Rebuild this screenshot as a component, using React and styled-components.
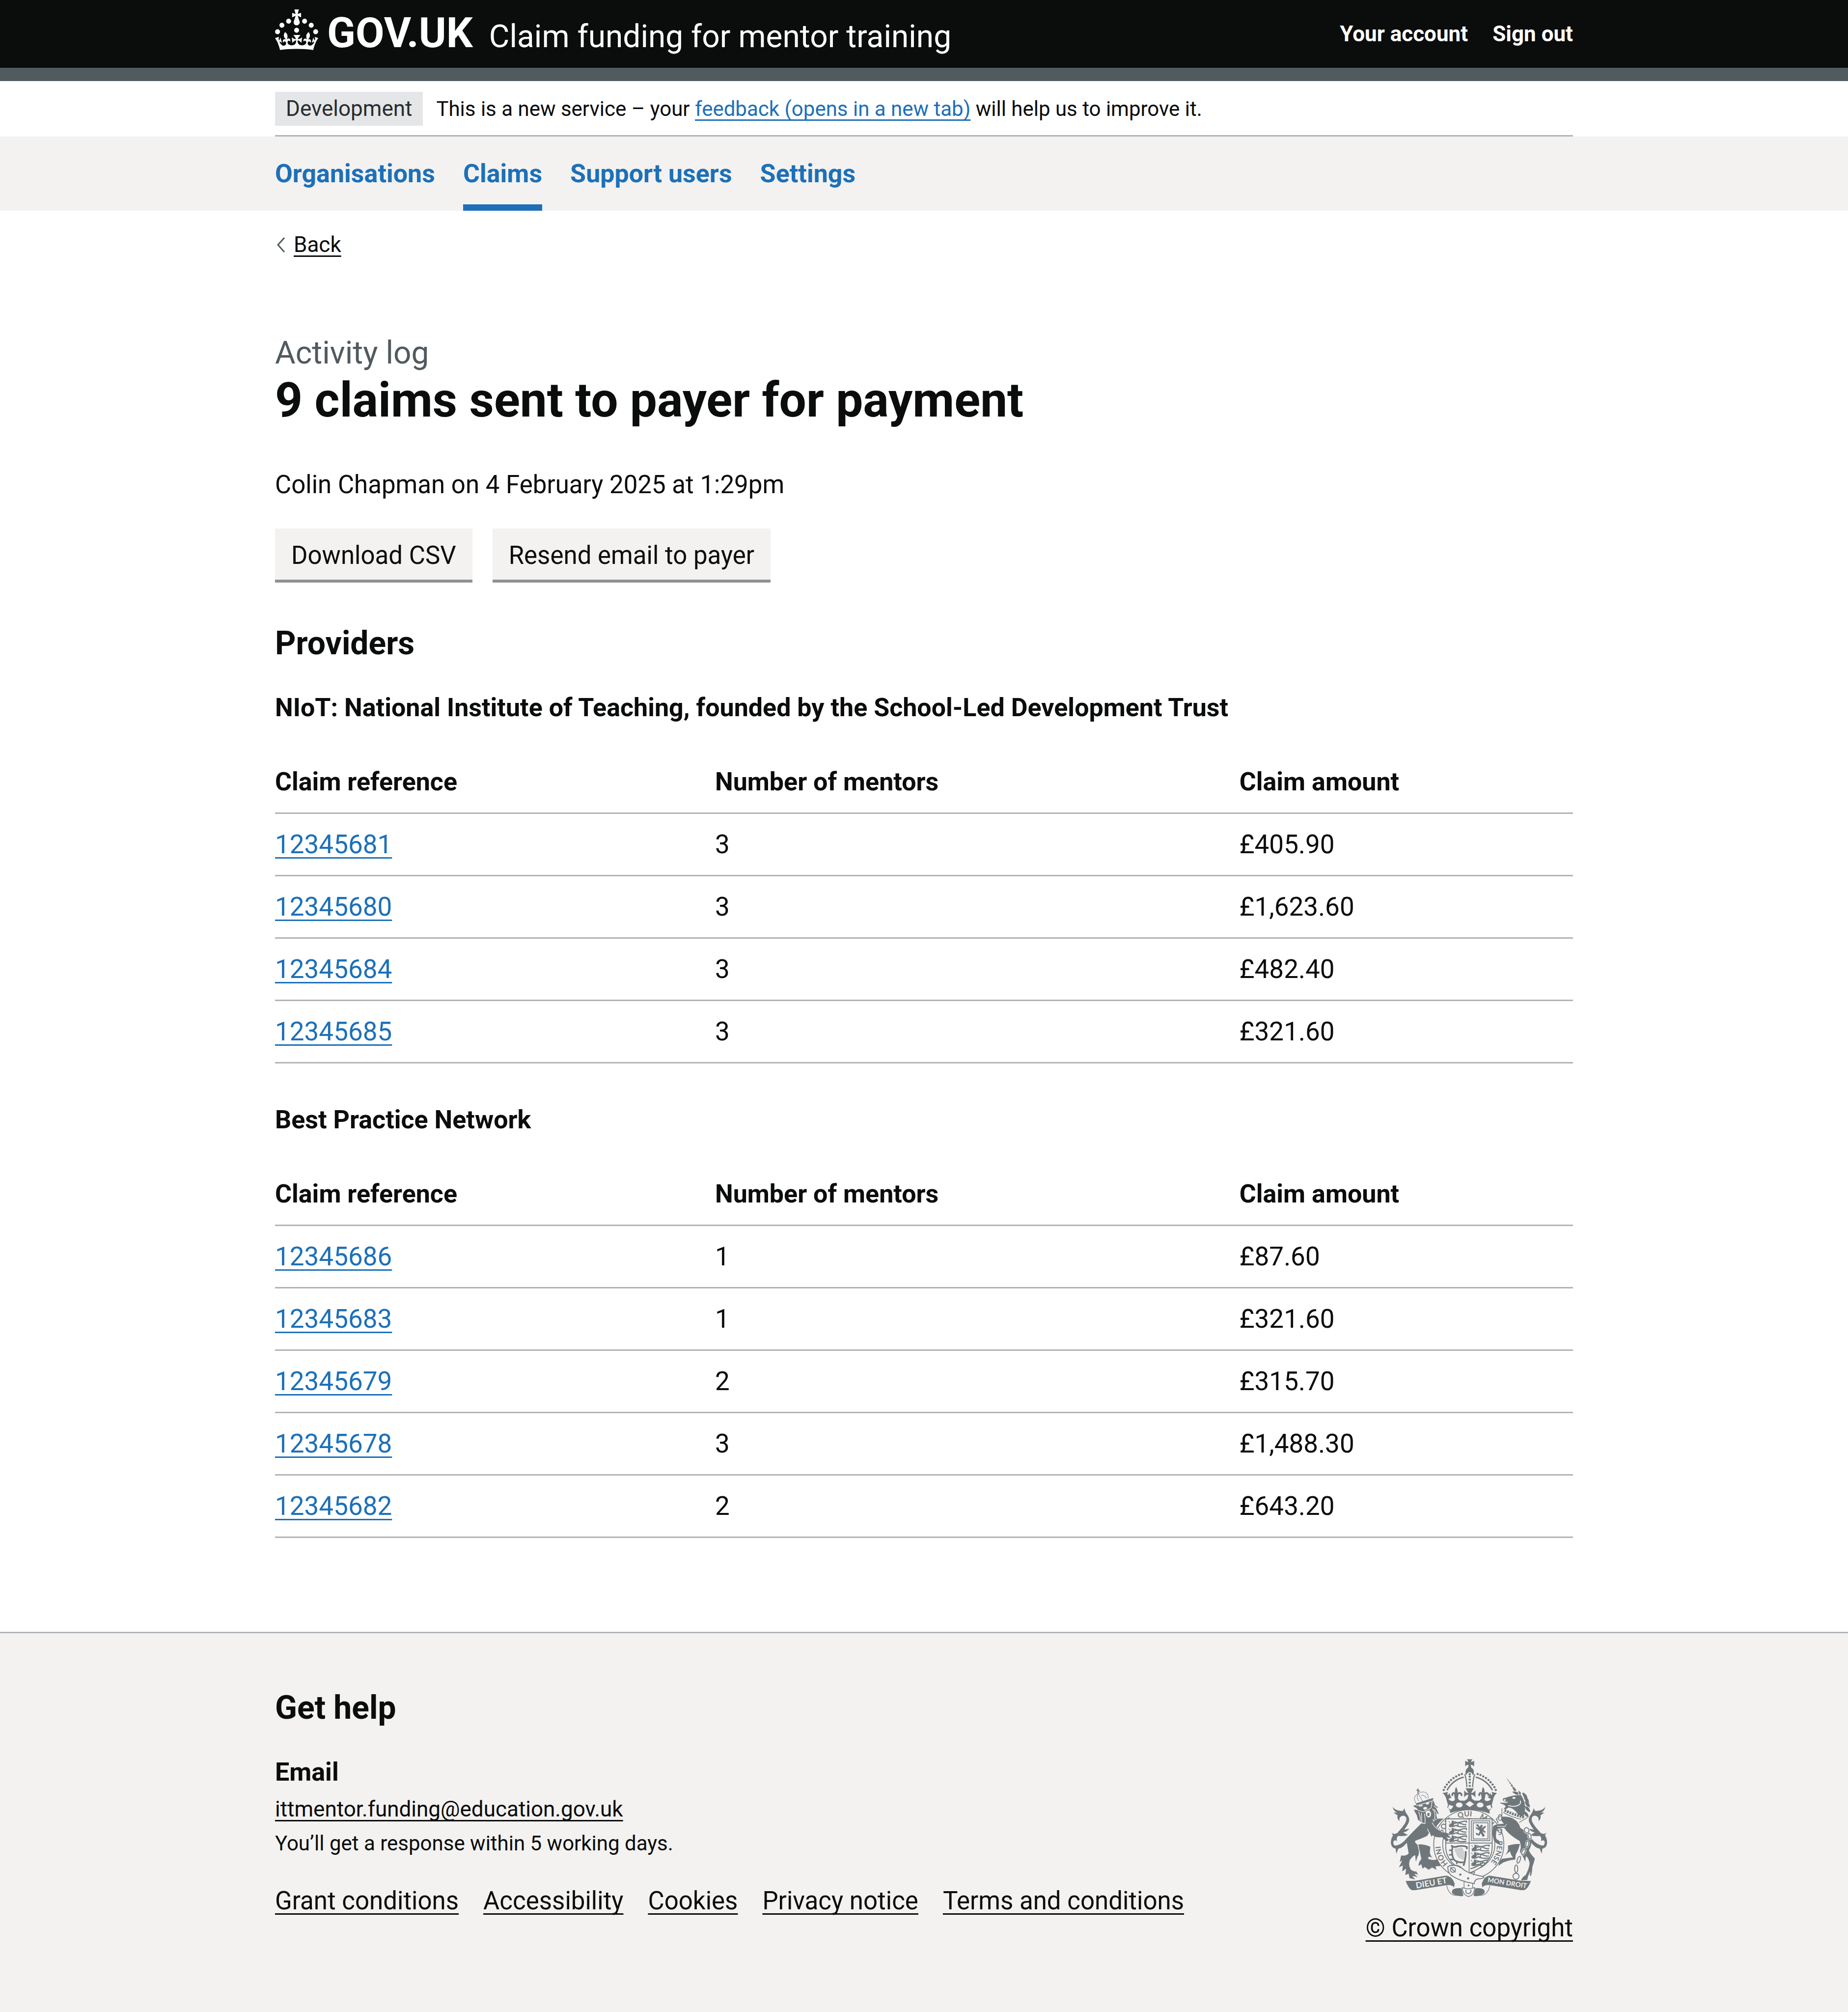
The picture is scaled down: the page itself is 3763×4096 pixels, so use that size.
import React from "react";
import styled, { createGlobalStyle } from "styled-components";

const color = {
  text: "#0b0c0c",
  secondary: "#505a5f",
  link: "#1d70b8",
  border: "#b1b4b6",
  panel: "#f3f2f1",
  crest: "#6f777b",
  white: "#ffffff",
};

const GlobalStyle = createGlobalStyle`
  *, *::before, *::after { box-sizing: border-box; }
  body {
    margin: 0;
    background: ${color.panel};
    color: ${color.text};
    font-family: Roboto, "Liberation Sans", sans-serif;
    font-size: 51px;
    line-height: 69px;
    -webkit-font-smoothing: antialiased;
  }
  h1, h2, h3, p, ul { margin: 0; padding: 0; }
  ul { list-style: none; }
`;

const Container = styled.div`
  max-width: 2643px;
  margin: 0 auto;
`;

const Link = styled.a`
  color: ${(p) => (p.$muted ? color.text : color.link)};
  text-decoration: underline;
  text-decoration-thickness: 3px;
  text-decoration-skip-ink: none;
  text-underline-offset: ${(p) => (p.$small ? "7px" : "8px")};
`;

/* Header */

const HeaderBar = styled.header`
  background: ${color.text};
  border-bottom: 27px solid ${color.secondary};
`;

const HeaderInner = styled(Container)`
  display: flex;
  justify-content: space-between;
  height: 138px;
`;

const Brand = styled.div`
  display: flex;
  align-items: baseline;
  gap: 33px;
`;

const HomeLink = styled.a`
  display: flex;
  align-items: baseline;
  gap: 18px;
  color: ${color.white};
  font-size: 85px;
  font-weight: 700;
  line-height: 134px;
  text-decoration: none;
`;

const CrownIcon = styled.svg`
  align-self: flex-start;
  width: 88px;
  height: 83px;
  margin-top: 19px;
  fill: currentColor;
`;

const ServiceLink = styled.a`
  color: ${color.white};
  font-size: 64px;
  text-decoration: none;
`;

const AccountNav = styled.nav`
  display: flex;
  gap: 50px;
`;

const AccountLink = styled.a`
  color: ${color.white};
  font-size: 44px;
  font-weight: 700;
  line-height: 138px;
  text-decoration: none;
`;

/* Phase banner */

const PhaseArea = styled.div`
  background: ${color.white};
`;

const PhaseBanner = styled(Container)`
  display: flex;
  gap: 27px;
  padding: 22px 0 19px;
  border-bottom: 3px solid ${color.border};
`;

const PhaseTag = styled.strong`
  padding: 0 22px;
  background: #e5e6e7;
  color: #282d30;
  font-size: 44px;
  font-weight: 400;
`;

const PhaseText = styled.p`
  font-size: 42px;
`;

/* Primary navigation */

const NavBar = styled.nav`
  background: ${color.panel};
`;

const NavList = styled(Container).attrs({ as: "ul" })`
  && { margin: 0 auto; }
  display: flex;
  gap: 57px;
`;

const NavLink = styled.a`
  display: block;
  color: ${color.link};
  font-size: 52px;
  font-weight: 700;
  line-height: 151px;
  text-decoration: none;
  box-shadow: ${(p) => (p.$current ? `inset 0 -13px ${color.link}` : "none")};
`;

/* Main content */

const Page = styled.div`
  background: ${color.white};
  padding: 42px 0 111px;
`;

const BackRow = styled.div`
  display: flex;
  align-items: center;
  gap: 18px;
  padding-left: 4px;
  font-size: 44px;
  line-height: 55px;
`;

const Chevron = styled.svg`
  width: 16px;
  height: 31px;
  fill: none;
  stroke: ${color.secondary};
  stroke-width: 3;
`;

const Main = styled.main`
  padding-top: 151px;
`;

const Caption = styled.span`
  display: block;
  color: ${color.secondary};
  font-size: 64px;
  font-weight: 400;
  line-height: 83px;
`;

const Title = styled.h1`
  font-size: 98px;
  font-weight: 700;
  line-height: 110px;
  padding-bottom: 82px;
`;

const ButtonGroup = styled.div`
  display: flex;
  gap: 41px;
  padding: 55px 0 82px;
`;

const Button = styled.button`
  padding: 20px 33px 15px;
  border: 0;
  border-bottom: 6px solid #929191;
  background: ${color.panel};
  color: ${color.text};
  font: inherit;
`;

const SectionHeading = styled.h2`
  font-size: 66px;
  font-weight: 700;
  line-height: 83px;
  padding-bottom: 55px;
`;

const SubHeading = styled.h3`
  font-size: 52px;
  font-weight: 700;
  line-height: 69px;
  padding-bottom: ${(p) => (p.$tight ? "14px" : "55px")};
`;

const Table = styled.table`
  width: 100%;
  table-layout: fixed;
  border-spacing: 0;
  margin-bottom: 80px;
`;

const HeadCell = styled.th`
  width: ${(p) => p.$width};
  padding: 27px 55px 27px 0;
  border-bottom: 3px solid ${color.border};
  font-size: 52px;
  font-weight: 700;
  line-height: 70px;
  text-align: left;
`;

const Cell = styled.td`
  padding: 27px 55px 27px 0;
  border-bottom: 3px solid ${color.border};
  font-size: 53px;
  line-height: 70px;
`;

/* Footer */

const FooterBar = styled.footer`
  padding: 110px 0 137px;
  border-top: 3px solid ${color.border};
  background: ${color.panel};
`;

const FooterRow = styled.div`
  display: flex;
  align-items: flex-end;
  justify-content: space-between;
`;

const FooterContent = styled.div`
  padding-bottom: 55px;
`;

const ContactList = styled.ul`
  display: grid;
  gap: 14px;
  line-height: 55px;
`;

const ContactItem = styled.li`
  font-size: ${(p) => (p.$note ? "42px" : "44px")};
`;

const FooterLinks = styled.ul`
  display: flex;
  gap: 50px;
  padding-top: 55px;
`;

const Copyright = styled.div`
  display: flex;
  flex-direction: column;
  align-items: center;
  gap: 28px;
`;

const CrestIcon = styled.svg`
  width: 321px;
  height: 281px;
`;

function Crown() {
  return (
    <CrownIcon viewBox="0 0 32 30" aria-hidden="true">
      <path d="M22.6 10.4c-1 .4-2-.1-2.4-1-.4-.9.1-2 1-2.4.9-.4 2 .1 2.4 1s-.1 2-1 2.4m-5.9 6.7c-.9.4-2-.1-2.4-1-.4-.9.1-2 1-2.4.9-.4 2 .1 2.4 1s-.1 2-1 2.4m10.8-3.7c-1 .4-2-.1-2.4-1-.4-.9.1-2 1-2.4.9-.4 2 .1 2.4 1s0 2-1 2.4m3.3 4.8c-1 .4-2-.1-2.4-1-.4-.9.1-2 1-2.4.9-.4 2 .1 2.4 1s-.1 2-1 2.4M17 4.7l2.3 1.2V2.5l-2.3.7-.2-.2.9-3h-3.4l.9 3-.2.2c-.1.1-2.3-.7-2.3-.7v3.4L15 4.7c.1.1.1.2.2.2l-1.3 4c-.1.2-.1.4-.1.6 0 1.1.8 2 1.9 2.2h.7c1-.2 1.9-1.1 1.9-2.1 0-.2 0-.4-.1-.6l-1.3-4c-.1-.2 0-.2.1-.3m-7.6 5.7c.9.4 2-.1 2.4-1 .4-.9-.1-2-1-2.4-.9-.4-2 .1-2.4 1s0 2 1 2.4m-5 3c.9.4 2-.1 2.4-1 .4-.9-.1-2-1-2.4-.9-.4-2 .1-2.4 1s.1 2 1 2.4m-3.2 4.8c.9.4 2-.1 2.4-1 .4-.9-.1-2-1-2.4-.9-.4-2 .1-2.4 1s0 2 1 2.4m14.8 11c4.4 0 8.6.3 12.3.8 1.1-4.5 2.4-7 3.7-8.8l-2.5-.9c.2 1.3.3 1.9 0 2.7-.4-.4-.8-1.1-1.1-2.3l-1.2 4c.7-.5 1.3-.8 2-.9-1.1 2.5-2.6 3.1-3.5 3-1.1-.2-1.7-1.2-1.5-2.1.3-1.2 1.5-1.5 2.1-.1 1.1-2.3-.8-3-2-2.3 1.9-1.9 2.1-3.5.6-5.6-2.1 1.6-2.1 3.2-1.2 5.5-1.2-1.4-3.2-.6-2.5 1.6.9-1.4 2.1-.5 1.9.8-.2 1.1-1.7 2.1-3.5 1.9-2.7-.2-2.9-2.1-2.9-3.6.7-.1 1.9.5 2.9 1.9l.4-4.3c-1.1 1.1-2.1 1.4-3.2 1.4.4-1.2 2.1-3 2.1-3h-5.4s1.7 1.9 2.1 3c-1.1 0-2.1-.2-3.2-1.4l.4 4.3c1-1.4 2.2-2 2.9-1.9-.1 1.5-.2 3.4-2.9 3.6-1.9.2-3.4-.8-3.5-1.9-.2-1.3 1-2.2 1.9-.8.7-2.3-1.2-3-2.5-1.6.9-2.2.9-3.9-1.2-5.5-1.5 2-1.3 3.7.6 5.6-1.2-.7-3.1 0-2 2.3.6-1.4 1.8-1.1 2.1.1.2.9-.3 1.9-1.5 2.1-.9.2-2.4-.5-3.5-3 .6 0 1.2.3 2 .9l-1.2-4c-.3 1.1-.7 1.9-1.1 2.3-.3-.8-.2-1.4 0-2.7l-2.9.9C1.3 23 2.6 25.5 3.7 30c3.7-.5 7.9-.8 12.3-.8" />
    </CrownIcon>
  );
}

const archBeads = [
  [735, 203], [710, 212], [685, 225], [661, 239], [639, 257],
  [620, 276], [602, 297], [586, 320], [574, 345],
];

/* One walking lion of the shield, drawn from its top left corner. */
function PassantLion({ x, y }) {
  return (
    <g transform={`translate(${x} ${y})`}>
      <path d="M4 2l14 12-2 14q12 2 16-6l2-22 20 6v40l-18 6q-24 0-30-14l14-4z" />
      <path
        d="M56 10q26 16 54 6t54-10v14M52 28q34-14 62 0t50 8M10 52q34 10 62-8q34 20 92 10M92 28l-6 18"
        fill="none"
        stroke={color.crest}
        strokeWidth="10"
      />
    </g>
  );
}

function SideTail() {
  return (
    <g>
      <path d="M120 492Q135 530 210 532L225 507Q228 535 245 558Q272 590 266 625Q250 670 200 725L165 722Q235 650 242 610Q245 580 215 574Q172 580 181 622Q155 605 163 572L128 546L158 546Q124 532 120 492Z" />
      <path d="M112 724Q130 748 165 726Q185 704 268 690Q250 716 214 724L256 746Q215 760 172 754Q150 762 158 800Q140 786 128 800Q118 828 140 840Q190 842 246 775L256 800Q215 862 170 868L152 912L146 868Q100 855 104 805Q108 770 122 752Z" />
    </g>
  );
}

function Crest() {
  return (
    <CrestIcon viewBox="100 70 1400 1228" fill={color.crest} role="img" aria-label="Royal coat of arms">
      <defs>
        <path id="mottoRing" d="M797 1080A252 250 0 0 1 797 580A252 250 0 0 1 797 1080" />
        <clipPath id="shieldClip">
          <path d="M592 602H1005V860Q1000 1010 800 1085Q600 1010 592 860Z" />
        </clipPath>
        <clipPath id="harpClip">
          <path d="M668 868L740 856L756 900V968Q690 960 668 868Z" />
        </clipPath>
      </defs>

      {/* Garter */}
      <g fill={color.panel} stroke={color.crest} strokeWidth="7">
        <ellipse cx="797" cy="830" rx="312" ry="308" />
        <ellipse cx="797" cy="830" rx="232" ry="230" />
      </g>
      <g fontFamily="Lato, sans-serif" fontSize="66" fontWeight="700">
        <text><textPath href="#mottoRing" startOffset="13%">HONI</textPath></text>
        <text><textPath href="#mottoRing" startOffset="31%">SOIT</textPath></text>
        <text><textPath href="#mottoRing" startOffset="44%">QUI</textPath></text>
        <text><textPath href="#mottoRing" startOffset="56%">MAL Y</textPath></text>
        <text><textPath href="#mottoRing" startOffset="73%">PENSE</textPath></text>
      </g>

      {/* Shield */}
      <path d="M592 602H1005V860Q1000 1010 800 1085Q600 1010 592 860Z" fill={color.panel} stroke={color.crest} strokeWidth="8" />
      <g clipPath="url(#shieldClip)">
        <path d="M800 602V1085M592 818H1005" stroke={color.crest} strokeWidth="7" />
        <PassantLion x={612} y={616} />
        <PassantLion x={612} y={682} />
        <PassantLion x={612} y={748} />
        <PassantLion x={814} y={830} />
        <PassantLion x={812} y={896} />
        <PassantLion x={810} y={962} />
        <path d="M812 1046Q850 1040 930 990" fill="none" stroke={color.crest} strokeWidth="10" />
        <g fill="none" stroke={color.crest} strokeWidth="7">
          <rect x="820" y="620" width="164" height="176" />
          <rect x="836" y="637" width="132" height="144" />
        </g>
        <path d="M858 655L880 650L892 672L912 652L922 668L908 690L940 664L952 670L926 700L950 720L938 726L916 712L940 752L922 764L904 730L890 752L864 744L858 724L884 736L896 708L862 690L858 674L888 686Z" />
        <g stroke={color.crest} strokeWidth="4" clipPath="url(#harpClip)">
          {[0, 1, 2, 3, 4, 5, 6, 7, 8, 9].map((i) => (
            <path key={i} d={`M${610 + i * 14} 850L${730 + i * 14} 980`} />
          ))}
        </g>
        <g fill="none" stroke={color.crest}>
          <path d="M640 838Q660 862 700 846Q750 838 780 852V872" strokeWidth="15" />
          <path d="M652 848Q640 920 664 964Q700 1000 766 986" strokeWidth="15" />
          <path d="M770 890Q772 950 750 1020" strokeWidth="16" />
          <path d="M622 882H650M620 922H650M628 964H660M690 985V1004" strokeWidth="13" />
        </g>
      </g>

      {/* Strap and buckle */}
      <path d="M612 1025Q690 1000 730 1035Q780 1090 925 1115Q945 1125 905 1135Q850 1130 845 1178Q720 1160 640 1105Q605 1070 612 1025Z" fill={color.panel} stroke={color.crest} strokeWidth="8" />
      <g fill="none" stroke={color.crest} strokeWidth="8">
        <circle cx="656" cy="1056" r="22" />
        <path d="M632 1034L680 1078M625 1018Q690 1008 728 1040" />
        <path d="M755 1160V1216M832 1176V1216" strokeWidth="6" />
        <path d="M800 1085L850 1074L838 1104" strokeWidth="6" />
        <path d="M738 1215L792 1226L850 1215Q845 1285 793 1293Q745 1280 738 1215Z" fill={color.panel} strokeWidth="7" />
        <path d="M772 1232Q765 1266 793 1268Q822 1266 815 1232" />
        <path d="M600 1195Q615 1265 660 1280L740 1289M985 1195Q970 1265 926 1280L848 1289" strokeWidth="5" />
      </g>
      <circle cx="722" cy="1098" r="10" />
      <circle cx="791" cy="1132" r="10" />
      <circle cx="795" cy="1195" r="8" />
      <path d="M648 1240Q665 1214 732 1219L750 1286Q670 1290 648 1262Z" />
      <path d="M937 1240Q920 1214 856 1219L838 1286Q915 1290 937 1262Z" />

      {/* Royal crown */}
      <path d="M780 72H830L815 95Q830 97 845 85V135Q830 120 814 122L820 148Q840 158 842 182V205L831 212Q828 188 805 188Q782 188 778 212L768 204V182Q772 158 790 148L796 122Q780 120 765 135V85Q780 97 795 95Z" />
      <g fill="none" stroke={color.crest} strokeWidth="12">
        <path d="M761 205Q776 245 780 320M850 205Q835 245 831 320" strokeWidth="10" />
        <path d="M752 231Q655 255 603 348M859 231Q956 255 1008 348" />
      </g>
      {[204, 226, 252, 280, 308].map((y) => (
        <rect key={y} x="796" y={y - 8} width="19" height="17" rx="6" />
      ))}
      {archBeads.map(([x, y]) => (
        <React.Fragment key={x}>
          <circle cx={x} cy={y} r="10" />
          <circle cx={1611 - x} cy={y} r="10" />
        </React.Fragment>
      ))}
      <path d="M563 373Q590 370 610 362L606 385L626 404L650 444L686 410L720 440L760 440L805 410L850 440L890 440L925 410L962 444L986 404L1006 385L1001 362Q1020 370 1048 373Q1020 395 1014 430L1002 478L1007 500L982 526V556Q900 522 805 522Q710 522 632 550L628 526L606 500L612 478L598 430Q592 395 563 373Z" />
      <g fill={color.panel}>
        <circle cx="650" cy="408" r="37" />
        <circle cx="750" cy="402" r="36" />
        <circle cx="861" cy="402" r="36" />
        <circle cx="961" cy="408" r="37" />
        <ellipse cx="712" cy="479" rx="30" ry="22" />
        <ellipse cx="898" cy="479" rx="30" ry="22" />
        <path d="M805 443L843 471L805 497L768 471Z" />
        <path d="M622 478L660 490L638 520L611 508Z" />
        <path d="M989 478L951 490L973 520L1000 508Z" />
      </g>
      <path d="M768 330H842L818 372Q842 372 856 346V412Q838 386 818 388L830 445H780L794 388Q772 386 756 412V346Q770 372 793 372Z" />
      {[686, 926].map((x) => (
        <g key={x} transform={`translate(${x} 0)`}>
          <path d="M-2 318Q18 345 10 395L14 440H-14L-10 395Q-18 345-2 318Z" />
          <path d="M-8 418Q-6 372-26 372Q-40 378-34 398M8 418Q6 372 30 372Q50 378 46 398" fill="none" stroke={color.crest} strokeWidth="16" />
        </g>
      ))}
      <path d="M624 370L634 400L644 412L620 424L604 412Z" />
      <path d="M987 370L977 400L967 412L991 424L1007 412Z" />

      {/* Tails */}
      <SideTail />
      <g transform="translate(1598 0) scale(-1 1)">
        <SideTail />
      </g>

      {/* Lion */}
      <path d="M375 642Q300 715 240 780Q255 870 262 910Q240 935 195 928L183 985L205 972L175 1035L210 1016L205 1070L240 1046L232 1102L262 1090L270 1130L320 1142L295 1112Q320 1110 345 1125L312 1092Q335 1090 347 1105L332 1072Q300 1070 280 1052Q255 1010 275 965Q300 930 320 925L326 985L340 940Q360 920 350 870L340 830Q308 810 325 795Q350 788 425 755Q440 740 446 715L465 762L476 748Q500 770 560 766L600 804L622 790L596 766L640 772L610 745L634 744Q600 720 560 724Q520 700 500 655Q470 620 415 612L412 648Z" />
      <path d="M345 830Q400 825 455 850L450 900Q455 930 475 950Q430 925 436 958Q480 975 520 962L545 1022L500 1025L510 1055L470 1035L440 1055L405 1030L385 1046L375 1006L350 1020Q350 985 375 960Q365 900 345 830Z" />
      <path d="M415 600H470L484 626L525 600H575Q530 635 508 672Q490 640 470 632Q440 620 415 630Z" />
      <path d="M300 488L330 478L475 430L486 450L498 482L524 500L506 506L527 548L528 562L506 556L518 612L496 598L508 628L480 606L415 645L375 632L345 612L335 570L320 545L308 520L345 525L335 508Z" />
      <g fill={color.panel}>
        <path d="M352 482L388 478L384 490L356 494Z" />
        <path d="M412 462L446 452L440 474L418 474Z" />
        <path d="M390 505L410 494L430 505L412 522L396 518Z" />
        <path d="M412 536L446 526L462 552L458 580L436 592L418 574Z" />
      </g>
      <g fill="none" stroke={color.panel} strokeWidth="6">
        <path d="M330 486L478 442M345 526L392 540L460 506M470 450L462 506M474 512Q506 550 492 606M350 540Q372 585 364 622M376 550L378 636M402 555Q412 600 408 642M486 486L516 510M486 516L520 560" />
        <path d="M470 636Q500 690 540 704M430 690L440 720M320 800Q350 830 352 870" />
      </g>
      <path d="M428 552V574Q440 584 448 572V548Z" />
      <path d="M324 466L480 416L482 428L334 478Z" />
      <g fill="none" stroke={color.crest}>
        <path d="M326 460Q292 408 346 378Q362 400 384 444M346 378Q400 345 430 384Q440 405 434 426M350 440Q330 410 346 378M376 392Q410 390 420 424" strokeWidth="6" strokeDasharray="10 5" />
        <path d="M345 332V376M332 346L362 356" strokeWidth="9" />
      </g>

      {/* Unicorn */}
      <path d="M1130 233L1222 348L1202 356Z" />
      <path d="M1148 278L1168 266M1162 298L1184 288M1178 322L1204 310" stroke={color.panel} strokeWidth="6" />
      <path d="M1183 362Q1220 352 1240 374L1236 390Q1205 386 1183 362ZM1238 348L1262 372L1256 392L1244 380Z" />
      <path d="M1100 425Q1105 415 1125 415Q1170 395 1225 392L1262 390Q1302 450 1298 520Q1295 560 1280 582Q1240 575 1222 545Q1190 505 1150 502Q1130 520 1108 518L1126 488Q1105 470 1080 466L1075 458L1118 460Q1142 462 1145 450Q1098 455 1100 425Z" />
      <ellipse cx="1199" cy="416" rx="14" ry="8" fill={color.panel} />
      <circle cx="1117" cy="436" r="9" fill={color.panel} />
      <path d="M1148 484Q1200 500 1240 480Q1264 466 1256 440" fill="none" stroke={color.panel} strokeWidth="8" />
      {[[1300, 396], [1314, 432], [1322, 472], [1324, 514], [1310, 560]].map(([x, y]) => (
        <path key={y} d="M-28-26Q18-22 20 28Q-20 22-28-26Z" transform={`translate(${x} ${y})`} />
      ))}
      <path d="M1282 364Q1290 376 1296 392L1276 388Z" />
      <g fill="none" stroke={color.crest}>
        <path d="M1116 526Q1180 560 1294 590" strokeWidth="24" strokeDasharray="16 8" />
        <path d="M1092 508V570L1046 598M1104 545Q1180 590 1262 606M1322 588L1246 634" strokeWidth="6" />
        <ellipse cx="1076" cy="590" rx="16" ry="26" strokeWidth="8" />
        <path d="M1040 598L1060 640M1052 700Q1060 730 1090 720M1062 740Q1094 752 1090 690" strokeWidth="8" />
      </g>
      <path d="M1085 583Q1150 578 1190 600Q1240 625 1257 684Q1310 710 1345 765Q1368 820 1332 882Q1342 912 1385 955L1376 990Q1358 1030 1360 1070L1350 1112L1340 1104L1346 1070Q1322 1108 1318 1145L1262 1150Q1275 1115 1302 1105Q1345 1020 1336 985Q1320 930 1304 938L1300 984L1280 940Q1240 900 1258 870Q1264 840 1250 800Q1190 765 1150 728Q1125 705 1112 682Q1065 682 1045 700Q1034 750 1042 780L1070 800L1078 832Q1040 826 1022 796Q1000 740 1014 668Q1026 650 1110 646Q1080 620 1085 583Z" />
      <path d="M1145 840Q1200 825 1252 825Q1240 880 1215 920L1210 965Q1150 970 1105 990L1060 1020Q1075 950 1112 955L1190 945Q1168 920 1165 890L1120 925Q1155 890 1145 840Z" />
      <path d="M1050 668L1120 670L1132 650" fill="none" stroke={color.panel} strokeWidth="5" />
      {[
        [1312, 704, 20, 24, -20], [1338, 756, 13, 26, -15], [1318, 826, 12, 28, 10],
        [1284, 896, 13, 28, 25], [1242, 966, 13, 32, 20], [1219, 1046, 14, 34, 0],
      ].map(([x, y, rx, ry, angle]) => (
        <g key={y} transform={`translate(${x} ${y}) rotate(${angle})`} fill={color.panel}>
          <ellipse rx={rx} ry={ry} stroke={color.panel} strokeWidth="16" />
          <ellipse rx={rx} ry={ry} stroke={color.crest} strokeWidth="8" />
        </g>
      ))}
      <circle cx="1217" cy="1113" r="27" fill="none" stroke={color.crest} strokeWidth="8" />

      {/* Motto scrolls */}
      <path d="M235 1155L325 1153L590 1108Q650 1110 671 1180L666 1212Q645 1185 600 1192L320 1237H290Q262 1225 235 1155Z" />
      <path d="M1350 1155L1258 1153L985 1108Q935 1110 912 1180L918 1212Q940 1185 985 1192L1262 1237H1290Q1325 1225 1350 1155Z" />
      <g fill={color.panel} fontFamily="Lato, sans-serif" fontWeight="700">
        <text fontSize="74" transform="translate(330 1222) rotate(-10)">DIEU ET</text>
        <text fontSize="60" transform="translate(962 1165) rotate(9)">MON DROIT</text>
      </g>
    </CrestIcon>
  );
}

const providers = [
  {
    name: "NIoT: National Institute of Teaching, founded by the School-Led Development Trust",
    claims: [
      ["12345681", "3", "£405.90"],
      ["12345680", "3", "£1,623.60"],
      ["12345684", "3", "£482.40"],
      ["12345685", "3", "£321.60"],
    ],
  },
  {
    name: "Best Practice Network",
    claims: [
      ["12345686", "1", "£87.60"],
      ["12345683", "1", "£321.60"],
      ["12345679", "2", "£315.70"],
      ["12345678", "3", "£1,488.30"],
      ["12345682", "2", "£643.20"],
    ],
  },
];

const navItems = ["Organisations", "Claims", "Support users", "Settings"];
const footerLinks = ["Grant conditions", "Accessibility", "Cookies", "Privacy notice", "Terms and conditions"];

function ClaimsTable({ label, claims }) {
  return (
    <Table aria-label={label}>
      <thead>
        <tr>
          <HeadCell scope="col" $width="33.9%">Claim reference</HeadCell>
          <HeadCell scope="col" $width="40.4%">Number of mentors</HeadCell>
          <HeadCell scope="col">Claim amount</HeadCell>
        </tr>
      </thead>
      <tbody>
        {claims.map(([reference, mentors, amount]) => (
          <tr key={reference}>
            <Cell><Link href="#">{reference}</Link></Cell>
            <Cell>{mentors}</Cell>
            <Cell>{amount}</Cell>
          </tr>
        ))}
      </tbody>
    </Table>
  );
}

export default function App() {
  return (
    <>
      <GlobalStyle />
      <HeaderBar>
        <HeaderInner>
          <Brand>
            <HomeLink href="#">
              <Crown />
              <span>GOV.UK</span>
            </HomeLink>
            <ServiceLink href="#">Claim funding for mentor training</ServiceLink>
          </Brand>
          <AccountNav aria-label="Account">
            <AccountLink href="#">Your account</AccountLink>
            <AccountLink href="#">Sign out</AccountLink>
          </AccountNav>
        </HeaderInner>
      </HeaderBar>

      <PhaseArea>
        <PhaseBanner>
          <PhaseTag>Development</PhaseTag>
          <PhaseText>
            This is a new service – your <Link href="#" $small>feedback (opens in a new tab)</Link> will help us to improve it.
          </PhaseText>
        </PhaseBanner>
      </PhaseArea>

      <NavBar aria-label="Primary">
        <NavList>
          {navItems.map((item) => (
            <li key={item}>
              <NavLink href="#" $current={item === "Claims"}>{item}</NavLink>
            </li>
          ))}
        </NavList>
      </NavBar>

      <Page>
        <Container>
          <BackRow>
            <Chevron viewBox="0 0 16 31" aria-hidden="true">
              <path d="M15 1L2 15.5L15 30" />
            </Chevron>
            <Link href="#" $muted $small>Back</Link>
          </BackRow>
          <Main>
            <Title>
              <Caption>Activity log</Caption>
              9 claims sent to payer for payment
            </Title>
            <p>Colin Chapman on 4 February 2025 at 1:29pm</p>
            <ButtonGroup>
              <Button type="button">Download CSV</Button>
              <Button type="button">Resend email to payer</Button>
            </ButtonGroup>
            <SectionHeading>Providers</SectionHeading>
            {providers.map((provider) => (
              <section key={provider.name}>
                <SubHeading>{provider.name}</SubHeading>
                <ClaimsTable label={provider.name} claims={provider.claims} />
              </section>
            ))}
          </Main>
        </Container>
      </Page>

      <FooterBar>
        <Container>
          <SectionHeading>Get help</SectionHeading>
          <FooterRow>
            <FooterContent>
              <SubHeading $tight>Email</SubHeading>
              <ContactList>
                <ContactItem>
                  <Link href="#" $muted $small>ittmentor.funding@education.gov.uk</Link>
                </ContactItem>
                <ContactItem $note>You’ll get a response within 5 working days.</ContactItem>
              </ContactList>
              <FooterLinks>
                {footerLinks.map((item) => (
                  <li key={item}><Link href="#" $muted>{item}</Link></li>
                ))}
              </FooterLinks>
            </FooterContent>
            <Copyright>
              <Crest />
              <Link href="#" $muted>© Crown copyright</Link>
            </Copyright>
          </FooterRow>
        </Container>
      </FooterBar>
    </>
  );
}
